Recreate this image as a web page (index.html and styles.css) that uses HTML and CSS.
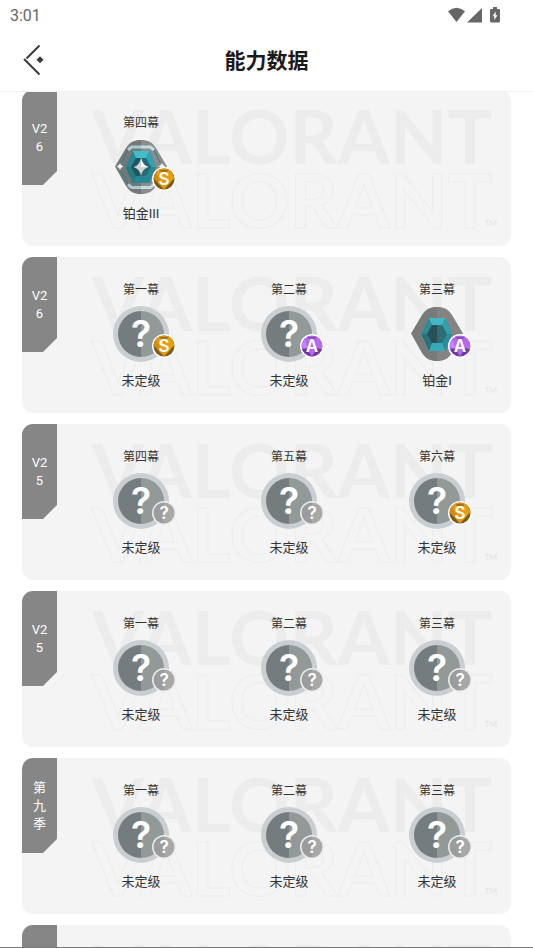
FILE: index.html
```
<!DOCTYPE html>
<html lang="zh-CN">
<head>
  <meta charset="UTF-8">
  <meta name="viewport" content="width=device-width, initial-scale=1">
  <title>能力数据</title>
  <link rel="stylesheet" href="styles.css">
</head>
<body>

<header class="header">
  <div class="status-bar">
    <span class="time">3:01</span>
    <div class="status-icons">
      <svg width="19" height="16" viewBox="0 0 19 16"><path d="M1 4.200Q9.500-2.800 18 4.200L9.500 15z"/></svg>
      <svg width="15" height="16" viewBox="0 0 15 16"><path d="M15 1v14.500H0z"/></svg>
      <svg class="battery" width="10" height="16" viewBox="0 0 10 16"><path fill-rule="evenodd" d="M3 0h4v2h2.200l.8.800V14.500l-1 1H1l-1-1V2.800L.8 2H3zM5.700 4.500 2.500 9.300h1.800v3.700L7.500 8.200H5.700z"/></svg>
    </div>
  </div>
  <div class="title-bar">
    <button class="back" aria-label="返回">
      <svg width="22" height="32" viewBox="0 1 22 32">
        <path d="M16.500 1.500 3.500 14.500M1 15 16.500 30.500" fill="none" stroke="#3c393b" stroke-width="2"/>
        <path d="M17 12.200 20.500 15.700 17 19.200 13.500 15.700z" fill="#3c393b"/>
      </svg>
    </button>
    <h1>能力数据</h1>
  </div>
</header>

<main class="seasons" id="seasons"></main>

<!-- shared rank icons -->
<svg class="defs" width="0" height="0" aria-hidden="true">
  <symbol id="unranked" viewBox="0 0 56 56">
    <circle cx="28" cy="28" r="28" fill="#c8ced2"/>
    <path d="M28 5a23 23 0 0 0 0 46z" fill="#747c7d"/>
    <path d="M28 5a23 23 0 0 1 0 46z" fill="#919999"/>
  </symbol>

  <symbol id="plat1" viewBox="0 0 56 56">
    <path d="M28 1C21 1 17 3 13 9L2 27.500 13 47c4 6 8 8 15 8z" fill="#797b7b"/>
    <path d="M28 1c7 0 11 2 15 8l11 18.500L43 47c-4 6-8 8-15 8z" fill="#858482"/>
    <path d="M20 12h16.500L43 28l-6.500 17H20l-7.500-17z" fill="#2b8b99"/>
    <path d="M20 12h16.500L33 19H23z" fill="#43b8c4"/>
    <path d="M36.500 12 43 28h-5l-5-9z" fill="#329fac"/>
    <path d="M12.500 28 20 45l3-8-5-9z" fill="#28717c"/>
    <path d="M20 45h16.500L33 37H23z" fill="#38a9b6"/>
    <path d="M28 19h-5l-5 9 5 9h5z" fill="#285059"/>
    <path d="M28 19h5l5 9-5 9h-5z" fill="#306c74"/>
  </symbol>

  <symbol id="plat3" viewBox="0 0 56 56">
    <path d="M28 1C21 1 17 3 13 9L2 27.500 13 47c4 6 8 8 15 8z" fill="#747777"/>
    <path d="M28 1c7 0 11 2 15 8l11 18.500L43 47c-4 6-8 8-15 8z" fill="#8b8c8b"/>
    <path d="M15 11 8.500 24M15 45 8.500 32M41 11l6.500 13M41 45l6.500-13" stroke="#27808b" stroke-width="1" fill="none"/>
    <path d="M28 8H18.500L15 11M28 48.500h-9.500L15 45.500" stroke="#a7cbd2" stroke-width="3" fill="none"/>
    <path d="M28 8h9.500l3.500 3M28 48.500h9.500l3.500-3" stroke="#c2dde1" stroke-width="3" fill="none"/>
    <path d="M20 12h16.500L43 28l-6.500 16H20l-7.500-16z" fill="#288795"/>
    <path d="M20 12h16.500L33 19H23z" fill="#43bdca"/>
    <path d="M36.500 12 43 28h-5l-5-9z" fill="#2fa4b2"/>
    <path d="M12.500 28 20 44l3-7-5-9z" fill="#277984"/>
    <path d="M28 19h-5l-5 9 5 9h5z" fill="#1e555e"/>
    <path d="M28 19h5l5 9-5 9h-5z" fill="#246b75"/>
    <path d="M28 19q1.500 7.500 7.500 9Q29.500 29.500 28 37q-1.500-7.500-7.500-9Q26.500 26.500 28 19z" fill="#d0d3d3"/>
    <path d="M28 19q1.500 7.500 7.500 9-6 0-7.500 0z" fill="#fff"/>
    <path d="M7 24q.8 3 3.500 3.500Q7.800 28 7 31q-.8-3-3.500-3.500Q6.200 27 7 24zM49 24q.8 3 3.500 3.500-2.700.5-3.500 3.500-.8-3-3.500-3.500 2.700-.5 3.500-3.500z" fill="#f2f3f3"/>
  </symbol>

  <symbol id="badge-S" viewBox="0 0 24 24">
    <circle cx="12" cy="12" r="12" fill="#fff"/>
    <circle cx="12" cy="12" r="10.500" fill="#7c5a18"/>
    <path d="M4 5.200Q7 1.500 12 1.500T20 5.200L22.500 11 12 22.500 1.500 11z" fill="#e79d10"/>
    <path d="M4 5.200 1.500 11 12 22.500z" fill="#d08c10"/>
    <path d="M7 2.700h10l-5 5z" fill="#a87214"/>
  </symbol>

  <symbol id="badge-A" viewBox="0 0 24 24">
    <circle cx="12" cy="12" r="12" fill="#fff"/>
    <circle cx="12" cy="12" r="10.500" fill="#b469ee"/>
    <path d="M4 5.200 1.500 11 12 22.500z" fill="#c883fa"/>
    <path d="M2 15.500q3 6 10 7L7 14zM22 15.500q-3 6-10 7l5-8.500z" fill="#6f3a9c"/>
    <path d="M7 2.700h10l-5 5z" fill="#8c4bc0"/>
  </symbol>

  <symbol id="badge-none" viewBox="0 0 24 24">
    <circle cx="12" cy="12" r="12" fill="#ececec"/>
    <path d="M12 1.500a10.500 10.500 0 0 0 0 21z" fill="#9c9c9c"/>
    <path d="M12 1.500a10.500 10.500 0 0 1 0 21z" fill="#a9a8a9"/>
  </symbol>
</svg>

<script>
  // act: [name, rank, badge]
  const seasons = [
    { name: 'V26', acts: [['第四幕', '铂金III', 'S']] },
    { name: 'V26', acts: [['第一幕', '未定级', 'S'], ['第二幕', '未定级', 'A'], ['第三幕', '铂金I', 'A']] },
    { name: 'V25', acts: [['第四幕', '未定级', '?'], ['第五幕', '未定级', '?'], ['第六幕', '未定级', 'S']] },
    { name: 'V25', acts: [['第一幕', '未定级', '?'], ['第二幕', '未定级', '?'], ['第三幕', '未定级', '?']] },
    { name: '第九季', acts: [['第一幕', '未定级', '?'], ['第二幕', '未定级', '?'], ['第三幕', '未定级', '?']] },
    { name: '', acts: [] }
  ];
  const icons = { '未定级': 'unranked', '铂金I': 'plat1', '铂金III': 'plat3' };

  function renderAct([name, rank, badge]) {
    const icon = icons[rank];
    const badgeIcon = badge === '?' ? 'none' : badge;
    return `
      <div class="act">
        <h2>${name}</h2>
        <div class="rank-icon">
          <svg width="56" height="56"><use href="#${icon}"/></svg>
          ${icon === 'unranked' ? '<span class="mark">?</span>' : ''}
          <div class="badge">
            <svg width="24" height="24"><use href="#badge-${badgeIcon}"/></svg>
            <span class="grade">${badge}</span>
          </div>
        </div>
        <p>${rank}</p>
      </div>`;
  }

  document.getElementById('seasons').innerHTML = seasons.map(season => `
    <section class="season">
      <div class="watermark" aria-hidden="true">
        <div class="word">VALORANT</div>
        <div class="word outline">VALORANT</div>
        <span class="tm">TM</span>
      </div>
      <div class="season-tab"><span>${season.name}</span></div>
      <div class="acts">${season.acts.map(renderAct).join('')}</div>
    </section>`).join('');
</script>

</body>
</html>
```
FILE: styles.css
```
* {
  box-sizing: border-box;
}

body {
  display: flex;
  flex-direction: column;
  margin: 0;
  height: 100vh;
  background: #fff;
  color: #333;
  font-family: Roboto, "Noto Sans CJK SC", sans-serif;
  border-bottom: 1px solid #777;
}

h1, h2, p {
  margin: 0;
  font-weight: 400;
}

.header {
  position: relative;
  z-index: 1;
  background: #fff;
  border-bottom: 1px solid #f0f0f0;
}

.status-bar {
  display: flex;
  justify-content: space-between;
  align-items: center;
  height: 30px;
  padding: 0 33px 0 10px;
}

.time {
  font-size: 16px;
  color: #666;
}

.status-icons {
  display: flex;
  gap: 1px;
  fill: #666;
}

.battery {
  margin-left: 7px;
}

.title-bar {
  display: grid;
  grid-template-columns: 1fr auto 1fr;
  align-items: center;
  height: 61px;
  padding: 0 23px;
}

.title-bar h1 {
  font-size: 21px;
  line-height: 28px;
  font-weight: 700;
  color: #1a1a1a;
}

.back {
  justify-self: start;
  padding: 0;
  border: none;
  background: none;
  cursor: pointer;
}

.back svg {
  display: block;
}

.seasons {
  flex: 1;
  min-height: 0;
  display: flex;
  flex-direction: column;
  gap: 11px;
  margin-top: -2px;
  padding: 0 22px;
  overflow: hidden;
}

.season {
  position: relative;
  display: flex;
  align-items: flex-start;
  flex-shrink: 0;
  min-height: 156px;
  border-radius: 11px;
  background: #f4f4f4;
  overflow: hidden;
}

.season-tab {
  display: flex;
  justify-content: center;
  align-items: center;
  width: 35px;
  height: 95px;
  background: #868686;
  clip-path: polygon(0 0, 100% 0, 100% 81px, 21px 100%, 0 100%);
  color: #fff;
  font-size: 13px;
  line-height: 18px;
  text-align: center;
}

.season-tab span {
  width: 20px;
  word-break: break-all;
}

.acts {
  position: relative;
  flex: 1;
  display: grid;
  grid-template-columns: repeat(3, 1fr);
  margin-left: 10px;
}

.act {
  display: flex;
  flex-direction: column;
  align-items: center;
  padding-top: 24px;
}

.act h2 {
  font-size: 12px;
  line-height: 18px;
}

.act p {
  font-size: 13px;
  line-height: 18px;
}

.rank-icon {
  position: relative;
  width: 56px;
  height: 56px;
  margin: 7px 0 10px;
}

.rank-icon svg {
  display: block;
}

.mark,
.grade {
  position: absolute;
  inset: 0;
  color: #fff;
  font-family: Inter, sans-serif;
  font-weight: 600;
  text-align: center;
}

.mark {
  font-size: 37px;
  line-height: 56px;
}

.badge {
  position: absolute;
  left: 39px;
  top: 28px;
}

.grade {
  font-size: 17px;
  line-height: 24px;
}

/* big faded wordmark behind the acts */
.watermark {
  position: absolute;
  top: 13px;
  right: 14px;
  left: 70px;
  font-family: Lato, sans-serif;
}

.word {
  font-size: 75px;
  line-height: 64px;
  font-weight: 700;
  color: #ececec;
}

.outline {
  color: #f4f4f4;
  -webkit-text-stroke: 1px #ededed;
}

.tm {
  position: absolute;
  right: 0;
  bottom: 4px;
  font-size: 8px;
  line-height: 8px;
  color: #e4e4e4;
}
```
